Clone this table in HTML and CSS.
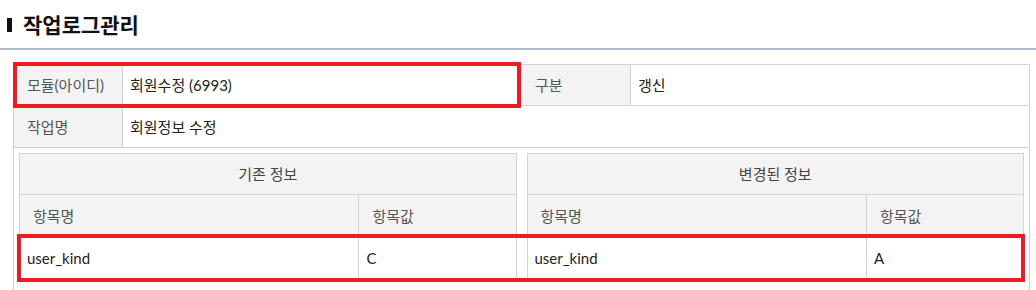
FILE: index.html
```html
<!DOCTYPE html>
<html lang="ko">
<head>
<meta charset="utf-8">
<title>작업로그관리</title>
<link rel="stylesheet" href="styles.css">
</head>
<body>
<div class="page">
  <h1 class="title"><span class="title-bar"></span><span>작업로그관리</span></h1>
  <div class="panel">
    <table class="info">
      <colgroup>
        <col class="c-label"><col class="c-value"><col class="c-label"><col class="c-value">
      </colgroup>
      <tr>
        <th>모듈(아이디)</th>
        <td>회원수정 (6993)</td>
        <th>구분</th>
        <td>갱신</td>
      </tr>
      <tr>
        <th>작업명</th>
        <td colspan="3">회원정보 수정</td>
      </tr>
      <tr>
        <td colspan="4" class="compare-cell">
          <div class="compare">
            <table class="sub">
              <colgroup><col><col class="c-sub-val"></colgroup>
              <tr><th colspan="2" class="center">기존 정보</th></tr>
              <tr><th>항목명</th><th>항목값</th></tr>
              <tr><td>user_kind</td><td>C</td></tr>
            </table>
            <table class="sub">
              <colgroup><col><col class="c-sub-val"></colgroup>
              <tr><th colspan="2" class="center">변경된 정보</th></tr>
              <tr><th>항목명</th><th>항목값</th></tr>
              <tr><td>user_kind</td><td>A</td></tr>
            </table>
          </div>
        </td>
      </tr>
    </table>
    <div class="mark mark-module"></div>
    <div class="mark mark-row"></div>
  </div>
</div>
</body>
</html>
```

FILE: styles.css
```css
* { box-sizing: border-box; }
html, body { margin: 0; padding: 0; background: #fff; }
body {
  font-family: Lato, "Noto Sans CJK KR", sans-serif;
  font-size: 15px;
  color: #222;
}
.page { width: 1036px; }
.title {
  margin: 0;
  height: 50px;
  display: flex;
  align-items: center;
  gap: 11px;
  padding-left: 7px;
  font-family: "Noto Sans CJK KR", sans-serif;
  font-size: 21px;
  font-weight: 700;
  color: #111;
  border-bottom: 2px solid #adb9c9;
}
.title-bar {
  width: 5px;
  height: 14px;
  background: #111;
  margin-top: 2px;
}
.panel {
  position: relative;
  padding: 14px 0 0 13px;
}
table { border-collapse: collapse; table-layout: fixed; }
.info { width: 1017px; }
.c-label { width: 109px; }
.c-value { width: 399px; }
th, td {
  border: 1px solid #d3d3d3;
  line-height: 20px;
  padding: 10px 7px;
  text-align: left;
  font-weight: 400;
  white-space: nowrap;
}
th {
  background: #f3f3f3;
  color: #555;
  padding-left: 13px;
}
td { color: #222; }
.info tr:nth-child(2) th,
.info tr:nth-child(2) td { padding-top: 11px; }
.compare-cell { padding: 5px 5px 14px 5px; }
.compare { display: flex; gap: 10px; }
.sub { flex: 1; width: 100%; }
.c-sub-val { width: 157px; }
.sub th.center { text-align: center; padding-left: 7px; color: #444; }
.sub tr:nth-child(n+2) th,
.sub tr:nth-child(n+2) td { padding-top: 11px; }
.mark {
  position: absolute;
  border: 4px solid #ed1c24;
  pointer-events: none;
}
.mark-module { left: 13px; top: 12px; width: 508px; height: 46px; }
.mark-row { left: 17px; top: 184px; width: 1008px; height: 48px; }
```
